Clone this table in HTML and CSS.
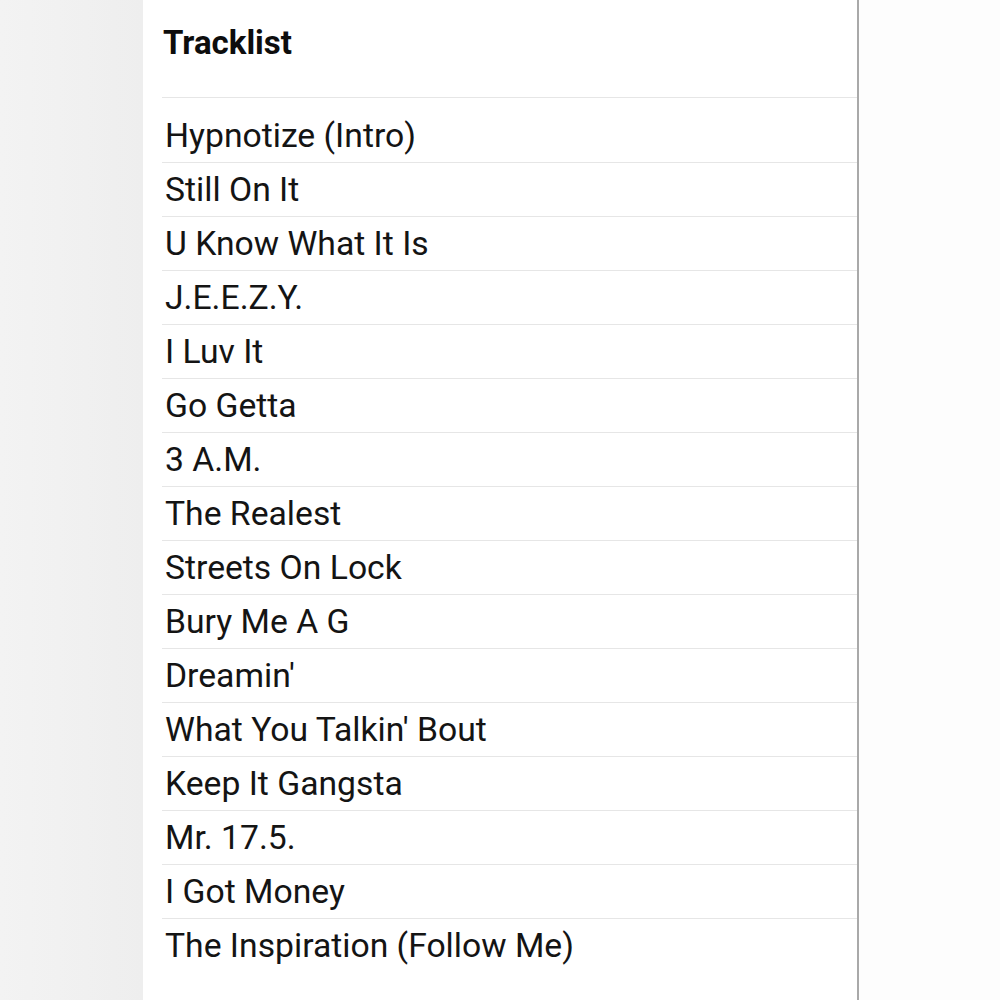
FILE: index.html
```html
<!DOCTYPE html>
<html lang="en">

<head>
    <meta charset="UTF-8">
    <meta name="viewport" content="width=device-width, initial-scale=1.0">
    <title>Tracklist</title>
    <link rel="stylesheet" href="styles.css">
</head>

<body>
    <div id="page">
        <div id="sideLeft"></div>
        <div id="panel">
            <h2 id="title">Tracklist</h2>
            <ul id="trackList">
                <li>Hypnotize (Intro)</li>
                <li>Still On It</li>
                <li>U Know What It Is</li>
                <li>J.E.E.Z.Y.</li>
                <li>I Luv It</li>
                <li>Go Getta</li>
                <li>3 A.M.</li>
                <li>The Realest</li>
                <li>Streets On Lock</li>
                <li>Bury Me A G</li>
                <li>Dreamin'</li>
                <li>What You Talkin' Bout</li>
                <li>Keep It Gangsta</li>
                <li>Mr. 17.5.</li>
                <li>I Got Money</li>
                <li>The Inspiration (Follow Me)</li>
            </ul>
        </div>
        <div id="sideRight"></div>
    </div>
</body>

</html>
```

FILE: styles.css
```css
body {
    margin: 0px;
    font-family: Roboto, "Liberation Sans", sans-serif;
    background-color: #fdfdfd;
}

#page {
    display: flex;
    height: 1000px;
    overflow: hidden;
}

#sideLeft {
    width: 143px;
    flex-shrink: 0;
    background: linear-gradient(to right, #f3f3f3, #eeeeee);
}

#panel {
    width: 695px;
    flex-shrink: 0;
    padding-left: 19px;
    background-color: white;
    border-right: 2px solid #a9a9a9;
}

#sideRight {
    flex: 1;
    background-color: #fdfdfd;
}

#title {
    margin: 0px;
    padding: 23px 0px 35px 1px;
    font-size: 33px;
    font-weight: bold;
    line-height: 39px;
    color: #0d0d0d;
    border-bottom: 1px solid #e6e6e6;
}

#trackList {
    list-style: none;
    margin: 11px 0px 0px 0px;
    padding: 0px;
}

#trackList li {
    font-size: 33.7px;
    line-height: 39px;
    padding: 7px 0px 7px 3px;
    color: #141414;
    border-bottom: 1px solid #e6e6e6;
}

#trackList li:last-child {
    border-bottom: none;
}
```
